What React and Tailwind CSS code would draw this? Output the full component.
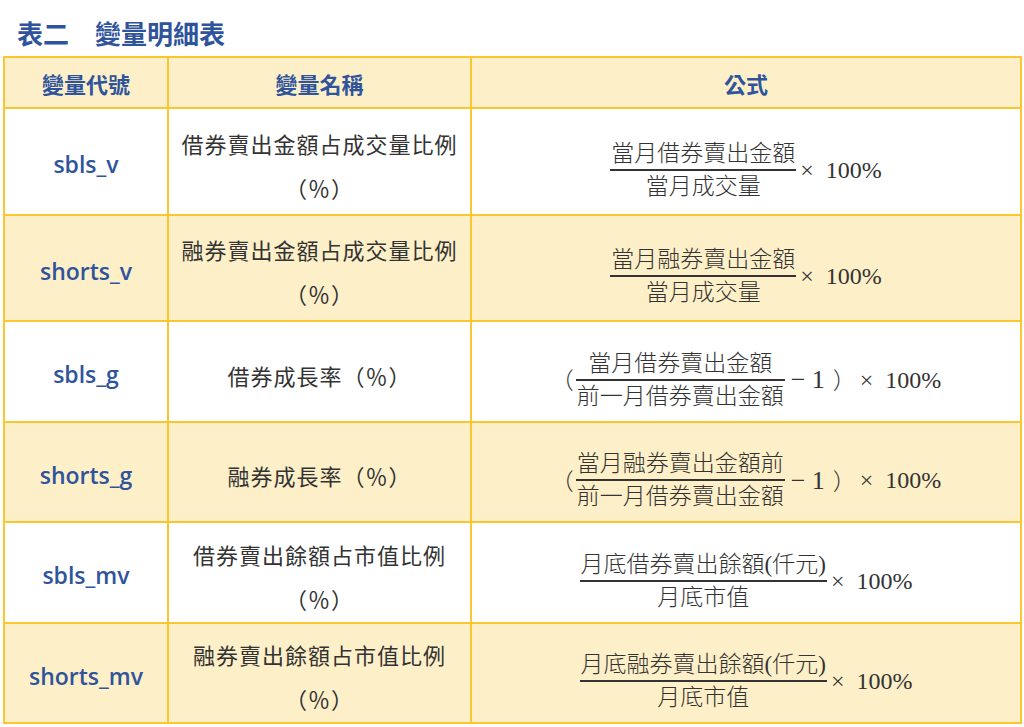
import React from "react";

const rows = [
  { code: "sbls_v", name: ["借券賣出金額占成交量比例", "（％）"], kind: "frac", num: "當月借券賣出金額", den: "當月成交量", h: "h-[107px]" },
  { code: "shorts_v", name: ["融券賣出金額占成交量比例", "（％）"], kind: "frac", num: "當月融券賣出金額", den: "當月成交量", h: "h-[106px]", alt: true },
  { code: "sbls_g", name: ["借券成長率（％）"], kind: "growth", num: "當月借券賣出金額", den: "前一月借券賣出金額", h: "h-[101px]" },
  { code: "shorts_g", name: ["融券成長率（％）"], kind: "growth", num: "當月融券賣出金額前", den: "前一月借券賣出金額", h: "h-[100px]", alt: true },
  { code: "sbls_mv", name: ["借券賣出餘額占市值比例", "（％）"], kind: "frac", num: "月底借券賣出餘額(仟元)", den: "月底市值", h: "h-[101px]" },
  { code: "shorts_mv", name: ["融券賣出餘額占市值比例", "（％）"], kind: "frac", num: "月底融券賣出餘額(仟元)", den: "月底市值", h: "h-[100px]", alt: true },
];

const Fraction = ({ num, den }) => (
  <span className="inline-flex flex-col items-center">
    <span className="px-[1px] leading-[31px]">{num}</span>
    <span className="w-full border-t-2 border-[#333]" />
    <span className="px-[1px] leading-[31px]">{den}</span>
  </span>
);

const Formula = ({ row }) => (
  <div className="flex items-center justify-center text-[23px] text-[#333] font-light [font-family:'Liberation_Serif','Noto_Sans_CJK_TC',serif]">
    {row.kind === "growth" && <span className="mr-[2px] [font-family:'Noto_Sans_CJK_TC',sans-serif]">（</span>}
    <Fraction num={row.num} den={row.den} />
    {row.kind === "growth" && (
      <>
        <span className="ml-[6px] text-[26px]">− 1</span>
        <span className="ml-[8px] [font-family:'Noto_Sans_CJK_TC',sans-serif]">）</span>
      </>
    )}
    <span className="ml-[4px] text-[24px] font-normal">×&nbsp; 100%</span>
  </div>
);

export default function App() {
  return (
    <div className="w-[1024px] h-[727px] bg-white [font-family:'Noto_Sans','Noto_Sans_CJK_TC',sans-serif] overflow-hidden">
      <h1 className="pl-[17px] pt-[14px] h-[56px] text-[26px] font-bold text-[#2f549c] leading-[38px] [font-family:'Noto_Sans_CJK_TC',sans-serif]">
        表二　變量明細表
      </h1>
      <table className="ml-[3px] w-[1019px] border-collapse table-fixed">
        <colgroup>
          <col className="w-[164px]" />
          <col className="w-[303px]" />
          <col />
        </colgroup>
        <thead>
          <tr className="h-[51px] bg-[#fdefc8] text-[#2f549c] text-[22px] font-bold [font-family:'Noto_Sans_CJK_TC',sans-serif]">
            <th className="border-2 border-[#fcc631] pt-[2px]">變量代號</th>
            <th className="border-2 border-[#fcc631] pt-[2px]">變量名稱</th>
            <th className="border-2 border-[#fcc631] pt-[2px]">公式</th>
          </tr>
        </thead>
        <tbody>
          {rows.map((r) => (
            <tr key={r.code} className={`${r.h} ${r.alt ? "bg-[#fdefc8]" : "bg-white"}`}>
              <td className="border-2 border-[#fcc631] pt-[6px] text-center text-[23px] font-semibold text-[#2f549c] [font-family:'Open_Sans',sans-serif]">
                {r.code}
              </td>
              <td className="border-2 border-[#fcc631] pt-[6px] text-center text-[22px] text-[#333] leading-[44px] [font-family:'Noto_Sans_CJK_TC',sans-serif] tracking-[1px]">
                {r.name.map((n, i) => (
                  <div key={i}>{n}</div>
                ))}
              </td>
              <td className="border-2 border-[#fcc631] pt-[16px]">
                <Formula row={r} />
              </td>
            </tr>
          ))}
        </tbody>
      </table>
    </div>
  );
}
